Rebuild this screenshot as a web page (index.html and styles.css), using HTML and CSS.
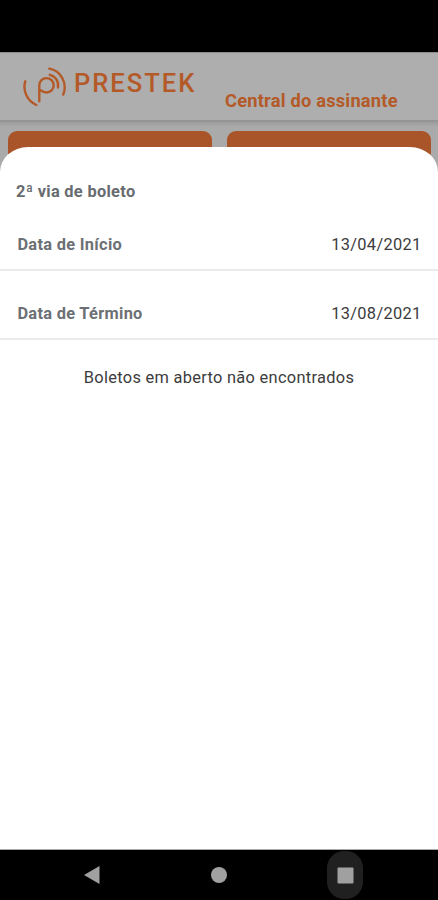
FILE: index.html
```html
<!DOCTYPE html>
<html lang="pt-BR">
<head>
<meta charset="utf-8">
<title>Central do assinante</title>
<link rel="stylesheet" href="styles.css">
</head>
<body>
<div class="phone">
  <div class="status"></div>
  <header class="header">
    <div class="brand">
      <svg class="mark" viewBox="22 65 46 43" width="46" height="43" fill="none" stroke="currentColor" stroke-width="2.4" stroke-linecap="round">
        <path d="M25.3 81.3C22.3 91 27.5 101 36.3 105"/>
        <path d="M39.3 101.2V85.3A7.2 7.2 0 1 1 46.5 92.5Q43 92.5 41 90.4"/>
        <path d="M49.8 74.8C55.5 76 59 81.5 58 87.5"/>
        <path d="M49.3 68.6C60.5 70.5 68 83 63.2 94.6"/>
      </svg>
      <span class="name">PRESTEK</span>
    </div>
    <h1 class="title">Central do assinante</h1>
  </header>
  <main class="main">
    <div class="tiles"><div class="tile"></div><div class="tile"></div></div>
    <section class="sheet">
      <h2 class="heading">2ª via de boleto</h2>
      <div class="row first"><span class="label">Data de Início</span><span class="date">13/04/2021</span></div>
      <div class="row second"><span class="label">Data de Término</span><span class="date">13/08/2021</span></div>
      <p class="empty">Boletos em aberto não encontrados</p>
    </section>
  </main>
  <nav class="nav">
    <span class="key"><svg width="16" height="18" viewBox="0 0 16 18"><path d="M0 9 15.5 0V18Z" fill="currentColor"/></svg></span>
    <span class="key"><svg width="16" height="16" viewBox="0 0 16 16"><circle cx="8" cy="8" r="8" fill="currentColor"/></svg></span>
    <span class="key pressed"><svg width="17" height="17" viewBox="0 0 17 17"><rect x=".5" y=".5" width="16" height="16" rx="1" fill="currentColor"/></svg></span>
  </nav>
</div>
</body>
</html>
```
FILE: styles.css
```css
* { box-sizing: border-box; }
body { margin: 0; font-family: Roboto, sans-serif; }
.phone { width: 438px; height: 900px; display: flex; flex-direction: column; background: #000; overflow: hidden; }
.status { height: 52px; flex: none; background: #000; }
.header { height: 70px; flex: none; display: flex; align-items: flex-start; background: #aeaeae; border-top: 1px solid #8c8c8c; border-bottom: 2px solid #949494; color: #b45a28; }
.brand { width: 225px; padding: 12px 0 0 22px; display: flex; }
.mark { flex: none; }
.name { margin: 3px 0 0 6px; font-size: 25.6px; line-height: 30px; font-weight: 500; letter-spacing: 1.95px; }
.title { margin: 37px 0 0; font-size: 18.3px; line-height: 22px; font-weight: 700; letter-spacing: .2px; white-space: nowrap; }
.main { flex: 1; min-height: 0; display: flex; flex-direction: column; background: linear-gradient(#9c9c9c, #aaa 5px); }
.tiles { flex: none; height: 58px; padding: 9px 7px 0 8px; display: grid; grid-template-columns: 204px 204px; gap: 15px; }
.tile { background: #a95429; border-radius: 9px 9px 0 0; }
.sheet { flex: 1; margin-top: -33px; background: #fff; border-radius: 28px 28px 0 0 / 25px 25px 0 0; border-bottom: 1px solid #aaa; font-size: 16.4px; line-height: 20px; letter-spacing: .3px; }
.heading { margin: 0; padding: 35px 16px 0; font-size: inherit; font-weight: 700; color: #686c70; }
.row { display: flex; justify-content: space-between; padding: 0 16.5px 0 17.4px; border-bottom: 2px solid #ebebeb; }
.first { height: 69px; padding-top: 33px; }
.second { height: 69px; padding-top: 33px; }
.label { font-weight: 700; color: #6c7074; }
.date { color: #3c3c3c; }
.empty { margin: 28px 0 0; text-align: center; color: #3c3c3c; }
.nav { height: 50px; flex: none; display: flex; gap: 91px; padding-left: 74px; color: #a0a0a0; }
.key { width: 36px; height: 50px; display: flex; align-items: center; justify-content: center; }
.pressed { margin: 1px 0 0 -1px; background: #202020; border-radius: 17px; height: 48px; }
```
